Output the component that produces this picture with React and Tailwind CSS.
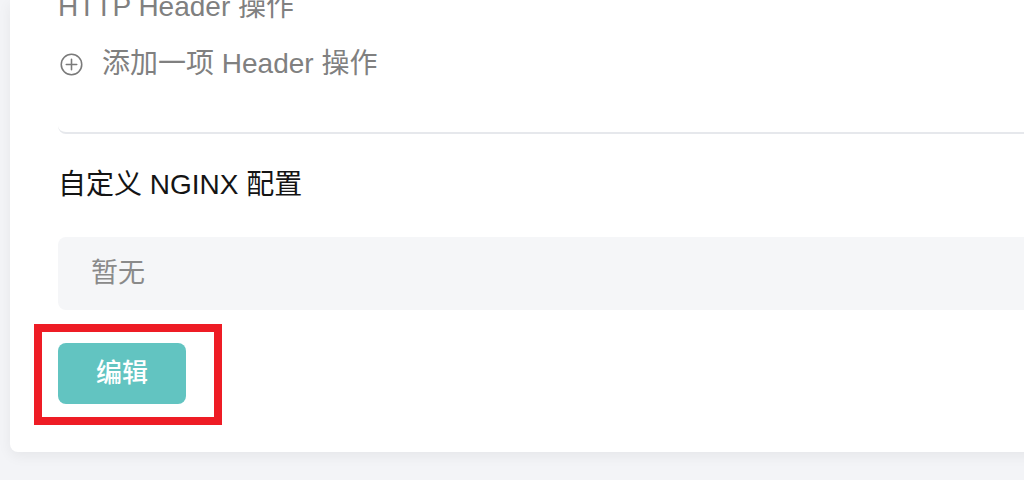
import React from "react";

const font = { fontFamily: '"Liberation Sans", "Noto Sans CJK SC", sans-serif' };

function PlusCircle() {
  return (
    <svg width="23" height="23" viewBox="0 0 22 22" fill="none" stroke="#7a7a7a" strokeWidth="1.5" strokeLinecap="round">
      <circle cx="11" cy="11" r="9.8" />
      <path d="M11 6v10M6 11h10" />
    </svg>
  );
}

export default function App() {
  return (
    <div className="relative w-[1024px] h-[480px] overflow-hidden bg-[#f3f4f7]" style={font}>
      <div className="ml-[10px] w-[1040px] h-[452px] bg-white rounded-bl-[8px] shadow-[0_4px_14px_rgba(0,0,0,0.06)] pl-[48px] flex flex-col">
        <div className="border-b-2 border-[#e6e8ec] rounded-bl-[8px] pb-[48px] -mt-[13px]">
          <div className="text-[28px] leading-[40px] text-[#808080]">HTTP Header 操作</div>
          <div className="mt-[17px] flex items-center h-[40px] text-[28px] leading-[40px] text-[#808080]">
            <span className="ml-[2px] flex items-center"><PlusCircle /></span>
            <span className="ml-[19px]">添加一项 Header 操作</span>
          </div>
        </div>
        <div className="mt-[31px] text-[28px] leading-[40px] text-[#141414]">自定义 NGINX 配置</div>
        <div className="mt-[32px] h-[73px] bg-[#f5f6f8] rounded-l-[8px] flex items-center pl-[33px] text-[27px] text-[#8a8a8a]">
          暂无
        </div>
        <div className="mt-[33px]">
          <button className="w-[128px] h-[61px] rounded-[8px] bg-[#62c4c1] text-white text-[26px] font-medium flex items-center justify-center">
            编辑
          </button>
        </div>
      </div>
      <div className="absolute left-[34px] top-[324px] w-[188px] h-[101px] border-[8px] border-[#ee1c25]" />
    </div>
  );
}
